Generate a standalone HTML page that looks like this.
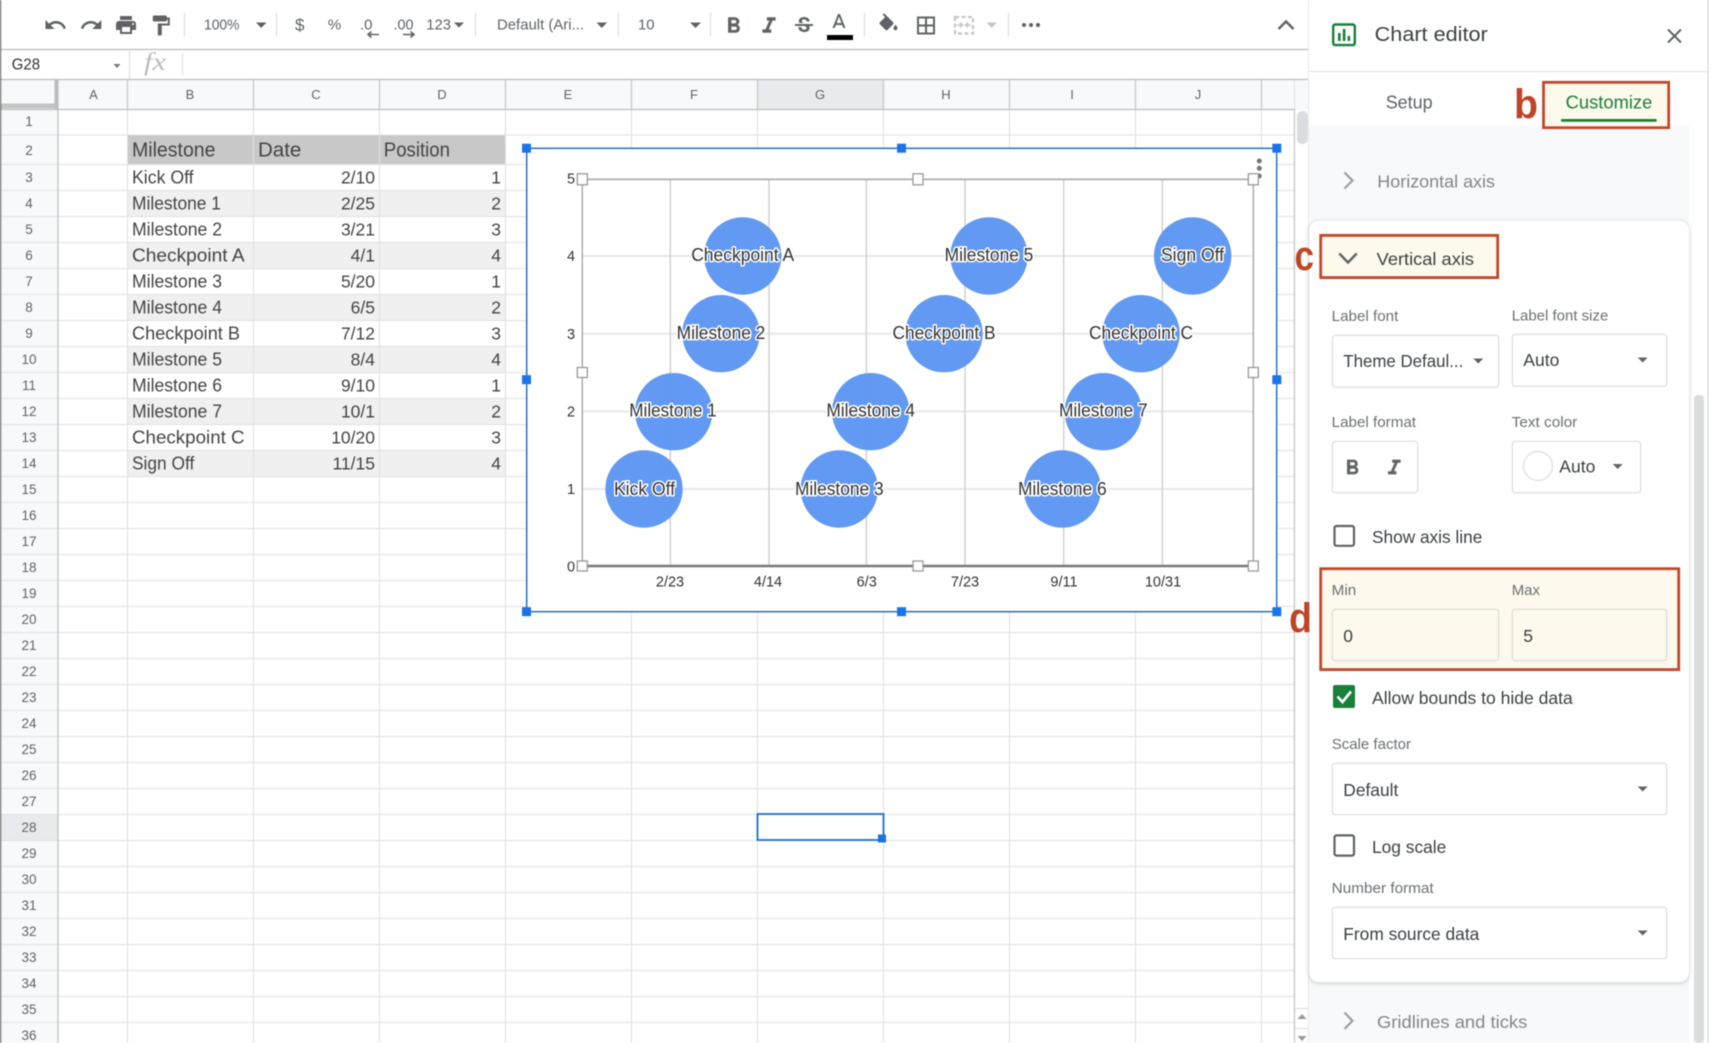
<!DOCTYPE html>
<html lang="en">
<head>
<meta charset="utf-8">
<title>Chart editor</title>
<style>
html,body{margin:0;padding:0;background:#fff;width:1712px;height:1043px;overflow:hidden}
svg{display:block;position:absolute;left:0;top:0;filter:blur(.4px)}
text{font-family:"Liberation Sans",sans-serif;white-space:pre}
.tb{font-size:15px;fill:#5f6368}
.hd{font-size:13px;fill:#5f6368;text-anchor:middle}
.rn{font-size:13.5px;fill:#5f6368;text-anchor:middle}
.th{font-size:20px;fill:#444}
.td{font-size:18px;fill:#444}
.tr{font-size:17.5px;fill:#444;text-anchor:end}
.ax{font-size:14.5px;fill:#333}
.axm{font-size:14.5px;fill:#333;text-anchor:middle}
.bl{font-size:18px;fill:#333;stroke:#fff;stroke-width:3px;paint-order:stroke;stroke-linejoin:round;text-anchor:middle}
.lb{font-size:15px;fill:#6b6f74}
.v{font-size:17.5px;fill:#3c4043}
.sec{font-size:17.5px;fill:#80868b}
.ltr{font-weight:bold;fill:#bf4526;font-size:42px}
.bx{fill:#fff;stroke:#dadce0;stroke-width:1.2}
.bub{fill:#5c95f1;fill-opacity:.96}
.h{fill:#1a73e8}
.oh{fill:#fff;stroke:#999;stroke-width:1.3}
</style>
</head>
<body>
<svg xmlns="http://www.w3.org/2000/svg" width="1712" height="1043" viewBox="0 0 1712 1043">
<rect width="1712" height="1043" fill="#fff"/>

<!-- column header and row header backgrounds -->
<rect x="0" y="79.5" width="1309" height="30" fill="#f8f9fa"/>
<rect x="0" y="109" width="58" height="934" fill="#f8f9fa"/>
<rect x="757.5" y="80" width="126" height="29" fill="#e8eaed"/>
<rect x="0" y="814.5" width="58" height="26" fill="#e8eaed"/>

<!-- table fills -->
<rect x="127" y="135" width="378" height="29.5" fill="#c8c8c8"/>
<g fill="#f0f0f0">
<rect x="127" y="190.5" width="378" height="26"/><rect x="127" y="242.5" width="378" height="26"/><rect x="127" y="294.5" width="378" height="26"/><rect x="127" y="346.5" width="378" height="26"/><rect x="127" y="398.5" width="378" height="26"/><rect x="127" y="450.5" width="378" height="26"/>
</g>

<!-- sheet grid -->
<path fill="none" stroke="#e1e1e1" stroke-width="1.1" d="M0 135H1294M0 164.5H1294M0 190.5H1294M0 216.5H1294M0 242.5H1294M0 268.5H1294M0 294.5H1294M0 320.5H1294M0 346.5H1294M0 372.5H1294M0 398.5H1294M0 424.5H1294M0 450.5H1294M0 476.5H1294M0 502.5H1294M0 528.5H1294M0 554.5H1294M0 580.5H1294M0 606.5H1294M0 632.5H1294M0 658.5H1294M0 684.5H1294M0 710.5H1294M0 736.5H1294M0 762.5H1294M0 788.5H1294M0 814.5H1294M0 840.5H1294M0 866.5H1294M0 892.5H1294M0 918.5H1294M0 944.5H1294M0 970.5H1294M0 996.5H1294M0 1022.5H1294"/>
<path fill="none" stroke="#e1e1e1" stroke-width="1.1" d="M127.5 109V1043M253.5 109V1043M379.5 109V1043M505.5 109V1043M631.5 109V1043M757.5 109V1043M883.5 109V1043M1009.5 109V1043M1135.5 109V1043M1261.5 109V1043"/>
<!-- header separators -->
<path fill="none" stroke="#c0c0c0" stroke-width="1.1" d="M127.5 80V109M253.5 80V109M379.5 80V109M505.5 80V109M631.5 80V109M757.5 80V109M883.5 80V109M1009.5 80V109M1135.5 80V109M1261.5 80V109"/>
<path d="M1294.5 80V109" stroke="#e4e4e4" stroke-width="1" fill="none"/>
<path fill="none" stroke="#bdbdbd" stroke-width="1.2" d="M0 49.5H1309M0 79.5H1309M0 109.5H1294M58 80V1043M1294.5 109V1043"/>
<rect x="54.5" y="80" width="3.5" height="29" fill="#bdbdbd"/>
<rect x="0" y="103.5" width="55" height="5" fill="#c4c4c4"/>
<rect x="0" y="0" width="1.2" height="1043" fill="#666"/>

<!-- toolbar -->
<g fill="#5f6368">
<path transform="translate(43.5 13)" d="M12.5 8c-2.65 0-5.05.99-6.9 2.6L2 7v9h9l-3.62-3.62c1.39-1.16 3.16-1.88 5.12-1.88 3.54 0 6.55 2.31 7.6 5.5l2.37-.78C21.08 11.03 17.15 8 12.5 8z"/>
<path transform="translate(79.3 13)" d="M18.4 10.6C16.55 8.99 14.15 8 11.5 8c-4.65 0-8.58 3.03-9.96 7.22L3.9 16c1.05-3.19 4.05-5.5 7.6-5.5 1.95 0 3.73.72 5.12 1.88L13 16h9V7l-3.6 3.6z"/>
<path transform="translate(114 13)" d="M19 8H5c-1.66 0-3 1.34-3 3v6h4v4h12v-4h4v-6c0-1.66-1.34-3-3-3zm-3 11H8v-5h8v5zm3-7c-.55 0-1-.45-1-1s.45-1 1-1 1 .45 1 1-.45 1-1 1zm-1-9H6v4h12V3z"/>
<path transform="translate(148.8 13.5)" d="M18 4V3c0-.55-.45-1-1-1H5c-.55 0-1 .45-1 1v4c0 .55.45 1 1 1h12c.55 0 1-.45 1-1V6h1v4H9v11c0 .55.45 1 1 1h2c.55 0 1-.45 1-1v-9h8V4h-3z"/>
<path transform="translate(734 25) scale(1.1) translate(-12.4 -11)" d="M15.6 10.79c.97-.67 1.65-1.77 1.65-2.79 0-2.26-1.75-4-4-4H7v14h7.04c2.09 0 3.71-1.7 3.71-3.79 0-1.52-.86-2.82-2.15-3.42zM10 6.5h3c.83 0 1.5.67 1.5 1.5s-.67 1.5-1.5 1.5h-3v-3zm3.5 9H10v-3h3.5c.83 0 1.5.67 1.5 1.5s-.67 1.5-1.5 1.5z"/>
<path transform="translate(769 25) scale(1.1) translate(-12 -11)" d="M10 4v3h2.21l-3.42 8H6v3h8v-3h-2.21l3.42-8H18V4z"/>
<path transform="translate(792 14)" d="M6.85 7.08C6.85 4.37 9.45 3 12.24 3c1.64 0 3 .49 3.9 1.28.77.65 1.46 1.73 1.46 3.24h-3.01c0-.31-.05-.59-.15-.85-.29-.86-1.2-1.28-2.25-1.28-1.86 0-2.34.98-2.34 1.7 0 .48.25.88.74 1.21.38.25.77.48 1.41.7H7.39c-.21-.34-.54-.89-.54-1.92zM21 12v-2H3v2h9.62c1.15.45 1.96.75 1.96 1.97 0 1-.81 1.67-2.28 1.67-1.54 0-2.93-.54-2.93-2.51H6.4c0 .55.08 1.13.24 1.58.81 2.29 3.29 3.3 5.67 3.3 2.27 0 5.3-.89 5.3-4.05 0-.3-.01-1.16-.48-1.94H21V12z"/>
<path transform="translate(827 11)" d="M11 3L5.5 17h2.25l1.12-3h6.25l1.12 3h2.25L13 3h-2zm-1.38 9L12 5.67 14.38 12H9.62z"/>
<path transform="translate(876.5 13.3)" d="M16.56 8.94L7.62 0 6.21 1.41l2.38 2.38-5.15 5.15c-.59.59-.59 1.54 0 2.12l5.5 5.5c.29.29.68.44 1.06.44s.77-.15 1.06-.44l5.5-5.5c.59-.58.59-1.53 0-2.12zM19 11.5s-2 2.17-2 3.5c0 1.1.9 2 2 2s2-.9 2-2c0-1.33-2-3.5-2-3.5z"/>
<path transform="translate(914 13.5)" d="M3 3v18h18V3H3zm8 16H5v-6h6v6zm0-8H5V5h6v6zm8 8h-6v-6h6v6zm0-8h-6V5h6v6z"/>
<circle cx="1024" cy="25" r="2"/><circle cx="1031" cy="25" r="2"/><circle cx="1038" cy="25" r="2"/>
</g>
<g fill="none" stroke="#c6c6c6" stroke-width="2.2">
<rect x="955" y="17" width="18" height="16.5" stroke-dasharray="4 2.5"/>
<path d="M957 25H962M960 22.5L962.5 25L960 27.5M971 25H966M968 22.5L965.5 25L968 27.5" stroke-width="1.5"/>
</g>
<rect x="827" y="35" width="26" height="5" fill="#000"/>
<path d="M986.5 22.5H997L991.7 28z" fill="#c6c6c6"/>
<path d="M1278.5 29L1286 21.5L1293.5 29" fill="none" stroke="#5f6368" stroke-width="2.4"/>
<path fill="none" stroke="#dcdcdc" stroke-width="1.1" d="M184.5 12.5V36.5M276.5 12.5V36.5M475.5 12.5V36.5M618.5 12.5V36.5M710.5 12.5V36.5M864.5 12.5V36.5M1008.5 12.5V36.5"/>
<text class="tb" x="204" y="29.5" textLength="35.5" lengthAdjust="spacingAndGlyphs">100%</text>
<text class="tb" x="299.7" y="30.5" text-anchor="middle" style="font-size:17px">$</text>
<text class="tb" x="334.6" y="29.5" text-anchor="middle">%</text>
<text class="tb" x="360" y="29.5" textLength="12.5" lengthAdjust="spacingAndGlyphs">.0</text>
<text class="tb" x="393.5" y="29.5" textLength="20" lengthAdjust="spacingAndGlyphs">.00</text>
<text class="tb" x="426.3" y="29.5" textLength="24.7" lengthAdjust="spacingAndGlyphs">123</text>
<text class="tb" x="497" y="29.5" textLength="87" lengthAdjust="spacingAndGlyphs">Default (Ari...</text>
<text class="tb" x="638" y="29.5" textLength="16.5" lengthAdjust="spacingAndGlyphs">10</text>
<path fill="none" stroke="#5f6368" stroke-width="1.6" d="M379 34.5H368M371.5 31.5L368 34.5L371.5 37.5M403 34.5H414M410.5 31.5L414 34.5L410.5 37.5"/>
<path fill="#5f6368" d="M256 22.5H266.5L261.2 28zM454 22.5H464L459 27.5zM596.5 22.5H607L601.8 28zM690 22.5H701L695.5 28z"/>

<!-- formula bar -->
<text x="11.8" y="69.5" textLength="28.2" lengthAdjust="spacingAndGlyphs" style="font-size:16px;fill:#333">G28</text>
<path fill="#777" d="M113.5 64H120.5L117 68z"/>
<path fill="none" stroke="#dcdcdc" stroke-width="1.1" d="M129.5 50V79M182.5 53V75"/>
<text x="144" y="70" textLength="22" lengthAdjust="spacingAndGlyphs" style="font-family:'Liberation Serif',serif;font-style:italic;font-size:25px;fill:#bdbdbd">fx</text>

<!-- column letters -->
<text class="hd" x="93.4" y="99">A</text><text class="hd" x="190" y="99">B</text><text class="hd" x="316" y="99">C</text><text class="hd" x="442" y="99">D</text><text class="hd" x="568" y="99">E</text><text class="hd" x="694" y="99">F</text><text class="hd" x="820" y="99">G</text><text class="hd" x="946" y="99">H</text><text class="hd" x="1072" y="99">I</text><text class="hd" x="1198" y="99">J</text>

<!-- row numbers -->
<g transform="translate(0 -.5)">
<text class="rn" x="29" y="126.7">1</text><text class="rn" x="29" y="155.7">2</text><text class="rn" x="29" y="182.3">3</text><text class="rn" x="29" y="208.3">4</text><text class="rn" x="29" y="234.3">5</text><text class="rn" x="29" y="260.3">6</text><text class="rn" x="29" y="286.3">7</text><text class="rn" x="29" y="312.3">8</text><text class="rn" x="29" y="338.3">9</text><text class="rn" x="29" y="364.3">10</text><text class="rn" x="29" y="390.3">11</text><text class="rn" x="29" y="416.3">12</text><text class="rn" x="29" y="442.3">13</text><text class="rn" x="29" y="468.3">14</text><text class="rn" x="29" y="494.3">15</text><text class="rn" x="29" y="520.3">16</text><text class="rn" x="29" y="546.3">17</text><text class="rn" x="29" y="572.3">18</text><text class="rn" x="29" y="598.3">19</text><text class="rn" x="29" y="624.3">20</text><text class="rn" x="29" y="650.3">21</text><text class="rn" x="29" y="676.3">22</text><text class="rn" x="29" y="702.3">23</text><text class="rn" x="29" y="728.3">24</text><text class="rn" x="29" y="754.3">25</text><text class="rn" x="29" y="780.3">26</text><text class="rn" x="29" y="806.3">27</text><text class="rn" x="29" y="832.3">28</text><text class="rn" x="29" y="858.3">29</text><text class="rn" x="29" y="884.3">30</text><text class="rn" x="29" y="910.3">31</text><text class="rn" x="29" y="936.3">32</text><text class="rn" x="29" y="962.3">33</text><text class="rn" x="29" y="988.3">34</text><text class="rn" x="29" y="1014.3">35</text><text class="rn" x="29" y="1040.3">36</text>
</g>

<!-- table text -->
<text class="th" x="132" y="156.7" textLength="83.5" lengthAdjust="spacingAndGlyphs">Milestone</text>
<text class="th" x="258" y="156.7" textLength="43.3" lengthAdjust="spacingAndGlyphs">Date</text>
<text class="th" x="383.8" y="156.7" textLength="66.2" lengthAdjust="spacingAndGlyphs">Position</text>
<text class="td" x="132" y="183.7" textLength="61.6" lengthAdjust="spacingAndGlyphs">Kick Off</text>
<text class="td" x="132" y="209.7" textLength="89" lengthAdjust="spacingAndGlyphs">Milestone 1</text>
<text class="td" x="132" y="235.7" textLength="90" lengthAdjust="spacingAndGlyphs">Milestone 2</text>
<text class="td" x="132" y="261.7" textLength="112.6" lengthAdjust="spacingAndGlyphs">Checkpoint A</text>
<text class="td" x="132" y="287.7" textLength="90" lengthAdjust="spacingAndGlyphs">Milestone 3</text>
<text class="td" x="132" y="313.7" textLength="90" lengthAdjust="spacingAndGlyphs">Milestone 4</text>
<text class="td" x="132" y="339.7" textLength="108" lengthAdjust="spacingAndGlyphs">Checkpoint B</text>
<text class="td" x="132" y="365.7" textLength="90" lengthAdjust="spacingAndGlyphs">Milestone 5</text>
<text class="td" x="132" y="391.7" textLength="90" lengthAdjust="spacingAndGlyphs">Milestone 6</text>
<text class="td" x="132" y="417.7" textLength="90" lengthAdjust="spacingAndGlyphs">Milestone 7</text>
<text class="td" x="132" y="443.7" textLength="112.6" lengthAdjust="spacingAndGlyphs">Checkpoint C</text>
<text class="td" x="132" y="469.7" textLength="62.3" lengthAdjust="spacingAndGlyphs">Sign Off</text>
<text class="tr" x="375" y="183.7">2/10</text><text class="tr" x="375" y="209.7">2/25</text><text class="tr" x="375" y="235.7">3/21</text><text class="tr" x="375" y="261.7">4/1</text><text class="tr" x="375" y="287.7">5/20</text><text class="tr" x="375" y="313.7">6/5</text><text class="tr" x="375" y="339.7">7/12</text><text class="tr" x="375" y="365.7">8/4</text><text class="tr" x="375" y="391.7">9/10</text><text class="tr" x="375" y="417.7">10/1</text><text class="tr" x="375" y="443.7">10/20</text><text class="tr" x="375" y="469.7">11/15</text>
<text class="tr" x="501" y="183.7">1</text><text class="tr" x="501" y="209.7">2</text><text class="tr" x="501" y="235.7">3</text><text class="tr" x="501" y="261.7">4</text><text class="tr" x="501" y="287.7">1</text><text class="tr" x="501" y="313.7">2</text><text class="tr" x="501" y="339.7">3</text><text class="tr" x="501" y="365.7">4</text><text class="tr" x="501" y="391.7">1</text><text class="tr" x="501" y="417.7">2</text><text class="tr" x="501" y="443.7">3</text><text class="tr" x="501" y="469.7">4</text>

<!-- selected cell -->
<rect x="757.5" y="814" width="126" height="26" fill="none" stroke="#1a6fd0" stroke-width="1.8"/>
<rect x="878" y="834.5" width="8" height="8" class="h"/>

<!-- chart -->
<rect x="526.7" y="148.3" width="750" height="463.4" fill="#fff"/>
<path fill="none" stroke="#e6e6e6" stroke-width="1.8" d="M582 256H1253M582 333.7H1253M582 411.5H1253M582 489H1253"/>
<path fill="none" stroke="#d4d4d4" stroke-width="1.6" d="M670.3 179V566M769 179V566M866.3 179V566M965 179V566M1063.7 179V566M1162.3 179V566"/>
<path fill="none" stroke="#a0a0a0" stroke-width="1.3" d="M582.3 179V566M1253.3 179V566"/>
<path fill="none" stroke="#a8a8a8" stroke-width="1.6" d="M582 179.3H1253.3"/>
<path fill="none" stroke="#777" stroke-width="2.6" d="M582 566H1253.3"/>
<circle class="bub" cx="742.7" cy="256" r="38.7"/><circle class="bub" cx="721" cy="333.7" r="38.7"/><circle class="bub" cx="673.7" cy="411.7" r="38.7"/><circle class="bub" cx="644" cy="489" r="38.7"/><circle class="bub" cx="839.3" cy="489" r="38.7"/><circle class="bub" cx="870.7" cy="411.7" r="38.7"/><circle class="bub" cx="989" cy="256" r="38.7"/><circle class="bub" cx="944" cy="333.7" r="38.7"/><circle class="bub" cx="1062.3" cy="489" r="38.7"/><circle class="bub" cx="1103.3" cy="411.7" r="38.7"/><circle class="bub" cx="1141" cy="333.7" r="38.7"/><circle class="bub" cx="1192.7" cy="256" r="38.7"/>
<text class="bl" x="742.7" y="261" textLength="103" lengthAdjust="spacingAndGlyphs">Checkpoint A</text>
<text class="bl" x="721" y="339" textLength="88.7" lengthAdjust="spacingAndGlyphs">Milestone 2</text>
<text class="bl" x="673" y="416.7" textLength="87.4" lengthAdjust="spacingAndGlyphs">Milestone 1</text>
<text class="bl" x="644.5" y="495" textLength="61" lengthAdjust="spacingAndGlyphs">Kick Off</text>
<text class="bl" x="839.3" y="495" textLength="88.7" lengthAdjust="spacingAndGlyphs">Milestone 3</text>
<text class="bl" x="870.7" y="416.7" textLength="88.7" lengthAdjust="spacingAndGlyphs">Milestone 4</text>
<text class="bl" x="989" y="261" textLength="88.7" lengthAdjust="spacingAndGlyphs">Milestone 5</text>
<text class="bl" x="944" y="339" textLength="103" lengthAdjust="spacingAndGlyphs">Checkpoint B</text>
<text class="bl" x="1062.3" y="495" textLength="88.7" lengthAdjust="spacingAndGlyphs">Milestone 6</text>
<text class="bl" x="1103.3" y="416.7" textLength="88.7" lengthAdjust="spacingAndGlyphs">Milestone 7</text>
<text class="bl" x="1141" y="339" textLength="104" lengthAdjust="spacingAndGlyphs">Checkpoint C</text>
<text class="bl" x="1192.5" y="261" textLength="63" lengthAdjust="spacingAndGlyphs">Sign Off</text>
<text class="ax" x="567" y="183.5">5</text><text class="ax" x="567" y="261">4</text><text class="ax" x="567" y="339">3</text><text class="ax" x="567" y="416.7">2</text><text class="ax" x="567" y="494">1</text><text class="ax" x="567" y="571.7">0</text>
<text class="axm" x="670" y="586.7">2/23</text><text class="axm" x="768" y="586.7">4/14</text><text class="axm" x="866.7" y="586.7">6/3</text><text class="axm" x="965" y="586.7">7/23</text><text class="axm" x="1064" y="586.7">9/11</text><text class="axm" x="1163" y="586.7">10/31</text>
<g fill="#757575"><circle cx="1259.3" cy="161" r="2.5"/><circle cx="1259.3" cy="168.3" r="2.5"/><circle cx="1259.3" cy="176" r="2.5"/></g>
<rect class="oh" x="577.3" y="173.8" width="10" height="11"/><rect class="oh" x="913" y="173.8" width="10" height="11"/><rect class="oh" x="1248.3" y="173.8" width="10" height="11"/>
<rect class="oh" x="577.3" y="367.5" width="10" height="10"/><rect class="oh" x="1248.3" y="367.5" width="10" height="10"/>
<rect class="oh" x="577.3" y="561" width="10" height="10"/><rect class="oh" x="913" y="561" width="10" height="10"/><rect class="oh" x="1248.3" y="561" width="10" height="10"/>
<rect x="526.7" y="148.3" width="750" height="463.4" fill="none" stroke="#2a6fc4" stroke-width="1.5"/>
<rect class="h" x="522" y="143.7" width="9" height="9"/><rect class="h" x="897" y="143.7" width="9" height="9"/><rect class="h" x="1272.3" y="143.7" width="9" height="9"/>
<rect class="h" x="522" y="375.2" width="9" height="9"/><rect class="h" x="1272.3" y="375.2" width="9" height="9"/>
<rect class="h" x="522" y="607.2" width="9" height="9"/><rect class="h" x="897" y="607.2" width="9" height="9"/><rect class="h" x="1272.3" y="607.2" width="9" height="9"/>

<!-- sheet scrollbar -->
<rect x="1295" y="110" width="14" height="933" fill="#fff"/>
<rect x="1297" y="111" width="10.8" height="33" rx="5" fill="#dadce0"/>
<path fill="none" stroke="#dadce0" d="M1294.5 1008.5H1309M1294.5 1028.5H1309"/>
<path fill="#9a9a9a" d="M1302 1014L1297.5 1019H1306.5zM1297.5 1036H1306.5L1302 1041z"/>

<!-- right panel -->
<rect x="1309" y="0" width="399" height="1043" fill="#fff"/>
<path d="M1308.5 0V1043" stroke="#e8e8e8" stroke-width="1"/>
<path d="M1708 0V1043" stroke="#cfcfcf" stroke-width="1"/>
<path d="M1309 71.5H1708" stroke="#dadce0" stroke-width="1"/>
<rect x="1333.2" y="24.5" width="21.6" height="20.6" rx="2" fill="none" stroke="#188038" stroke-width="2.4"/>
<path fill="#188038" d="M1338 33h2.6v8H1338zM1342.8 29h2.6v12h-2.6zM1347.6 36h2.6v5h-2.6z"/>
<text x="1374.7" y="41" textLength="113" lengthAdjust="spacingAndGlyphs" style="font-size:20px;fill:#3c4043">Chart editor</text>
<path d="M1668 29.5L1681 42.5M1681 29.5L1668 42.5" stroke="#5f6368" stroke-width="2" fill="none"/>
<text class="v" x="1385.7" y="108.3" textLength="47" lengthAdjust="spacingAndGlyphs" style="font-size:18px;fill:#5f6368">Setup</text>

<rect x="1309" y="125" width="380" height="918" fill="#f8f9fa"/>
<rect x="1309" y="220.7" width="380" height="761.6" rx="10" fill="#fff" style="filter:drop-shadow(0 1px 2px rgba(60,64,67,.28))"/>
<rect x="1694" y="395" width="10" height="648" rx="4" fill="#dadce0"/>

<rect x="1543.5" y="82.3" width="125.2" height="45.4" fill="#fdf9ec" stroke="#c0482c" stroke-width="2.8"/>
<text x="1565.7" y="108.3" textLength="86.6" lengthAdjust="spacingAndGlyphs" style="font-size:18px;fill:#188038">Customize</text>
<rect x="1561" y="119" width="95.7" height="2.8" rx="1" fill="#188038"/>
<text class="ltr" x="1514" y="118.3" textLength="24" lengthAdjust="spacingAndGlyphs">b</text>

<path d="M1344.5 172.5L1352.5 180.5L1344.5 188.5" fill="none" stroke="#9aa0a6" stroke-width="2.2"/>
<text class="sec" x="1377.3" y="187.7" textLength="117.7" lengthAdjust="spacingAndGlyphs">Horizontal axis</text>

<rect x="1320.7" y="235.4" width="177" height="42.2" fill="#fdf9ec" stroke="#c0482c" stroke-width="2.8"/>
<text class="ltr" x="1294.5" y="270" textLength="19.5" lengthAdjust="spacingAndGlyphs">c</text>
<path d="M1339.3 253.5L1348 262.5L1356.7 253.5" fill="none" stroke="#5f6368" stroke-width="2.4"/>
<text class="v" x="1376.7" y="265" textLength="97.3" lengthAdjust="spacingAndGlyphs">Vertical axis</text>

<text class="lb" x="1331.7" y="321" textLength="66.6" lengthAdjust="spacingAndGlyphs">Label font</text>
<text class="lb" x="1511.7" y="320.7" textLength="96.6" lengthAdjust="spacingAndGlyphs">Label font size</text>
<rect class="bx" x="1332.3" y="335.3" width="166.4" height="52" rx="3"/>
<rect class="bx" x="1512.3" y="334.3" width="154.4" height="52" rx="3"/>
<text class="v" x="1343.3" y="367.2" textLength="120" lengthAdjust="spacingAndGlyphs">Theme Defaul...</text>
<text class="v" x="1523.3" y="366" textLength="36" lengthAdjust="spacingAndGlyphs">Auto</text>
<path fill="#5f6368" d="M1473.3 358.5H1483.3L1478.3 363.5zM1637.7 357.5H1647.7L1642.7 362.5z"/>

<text class="lb" x="1331.7" y="426.8" textLength="84.3" lengthAdjust="spacingAndGlyphs">Label format</text>
<text class="lb" x="1511.7" y="426.8" textLength="65.6" lengthAdjust="spacingAndGlyphs">Text color</text>
<rect class="bx" x="1332.3" y="441.3" width="85.4" height="51.4" rx="3"/>
<rect class="bx" x="1512.3" y="441.3" width="128.4" height="51.4" rx="3"/>
<g fill="#5f6368">
<path transform="translate(1352.7 467) scale(1.05) translate(-12.4 -11)" d="M15.6 10.79c.97-.67 1.65-1.77 1.65-2.79 0-2.26-1.75-4-4-4H7v14h7.04c2.09 0 3.71-1.7 3.71-3.79 0-1.52-.86-2.82-2.15-3.42zM10 6.5h3c.83 0 1.5.67 1.5 1.5s-.67 1.5-1.5 1.5h-3v-3zm3.5 9H10v-3h3.5c.83 0 1.5.67 1.5 1.5s-.67 1.5-1.5 1.5z"/>
<path transform="translate(1394.3 467) scale(1.05) translate(-12 -11)" d="M10 4v3h2.21l-3.42 8H6v3h8v-3h-2.21l3.42-8H18V4z"/>
</g>
<circle cx="1538" cy="466" r="14.5" fill="#fff" stroke="#dadce0" stroke-width="1.2"/>
<text class="v" x="1559.3" y="472.7" textLength="36" lengthAdjust="spacingAndGlyphs">Auto</text>
<path fill="#5f6368" d="M1612.7 464H1622.7L1617.7 469z"/>

<rect x="1334.5" y="526" width="19.5" height="19.8" rx="2" fill="#fff" stroke="#5f6368" stroke-width="2.2"/>
<text class="v" x="1372" y="543" textLength="110.3" lengthAdjust="spacingAndGlyphs">Show axis line</text>

<rect x="1320.7" y="568.7" width="358" height="100.9" fill="#fdf9ec" stroke="#c0482c" stroke-width="2.8"/>
<text class="ltr" x="1289" y="632.7" textLength="23" lengthAdjust="spacingAndGlyphs">d</text>
<text class="lb" x="1331.7" y="595.2" textLength="24.6" lengthAdjust="spacingAndGlyphs">Min</text>
<text class="lb" x="1511.7" y="595.2" textLength="28.3" lengthAdjust="spacingAndGlyphs">Max</text>
<rect x="1332.3" y="609.3" width="166.4" height="51.4" rx="3" fill="#fdf9ec" stroke="#dcdad0" stroke-width="1.2"/>
<rect x="1512.3" y="609.3" width="154.4" height="51.4" rx="3" fill="#fdf9ec" stroke="#dcdad0" stroke-width="1.2"/>
<text class="v" x="1343.3" y="641.8">0</text>
<text class="v" x="1523.3" y="641.8">5</text>

<rect x="1333" y="685" width="22" height="23" rx="2" fill="#188038"/>
<path d="M1337.5 696.5L1342.5 702L1351 691.5" fill="none" stroke="#fff" stroke-width="2.6"/>
<text class="v" x="1372" y="704" textLength="200.7" lengthAdjust="spacingAndGlyphs">Allow bounds to hide data</text>

<text class="lb" x="1331.7" y="749" textLength="79.3" lengthAdjust="spacingAndGlyphs">Scale factor</text>
<rect class="bx" x="1332.3" y="763.3" width="334.4" height="51.4" rx="3"/>
<text class="v" x="1343.3" y="795.8" textLength="55" lengthAdjust="spacingAndGlyphs">Default</text>
<path fill="#5f6368" d="M1637.7 786.5H1647.7L1642.7 791.5z"/>

<rect x="1334.5" y="835.4" width="19.5" height="20.2" rx="2" fill="#fff" stroke="#5f6368" stroke-width="2.2"/>
<text class="v" x="1372" y="853" textLength="74.3" lengthAdjust="spacingAndGlyphs">Log scale</text>

<text class="lb" x="1331.7" y="893" textLength="102" lengthAdjust="spacingAndGlyphs">Number format</text>
<rect class="bx" x="1332.3" y="907.3" width="334.4" height="51.4" rx="3"/>
<text class="v" x="1343.3" y="939.8" textLength="136" lengthAdjust="spacingAndGlyphs">From source data</text>
<path fill="#5f6368" d="M1637.7 930.5H1647.7L1642.7 935.5z"/>

<path d="M1344.5 1012.5L1352.5 1020.8L1344.5 1029" fill="none" stroke="#9aa0a6" stroke-width="2.2"/>
<text class="sec" x="1377" y="1028" textLength="150.3" lengthAdjust="spacingAndGlyphs">Gridlines and ticks</text>
</svg>
</body>
</html>
